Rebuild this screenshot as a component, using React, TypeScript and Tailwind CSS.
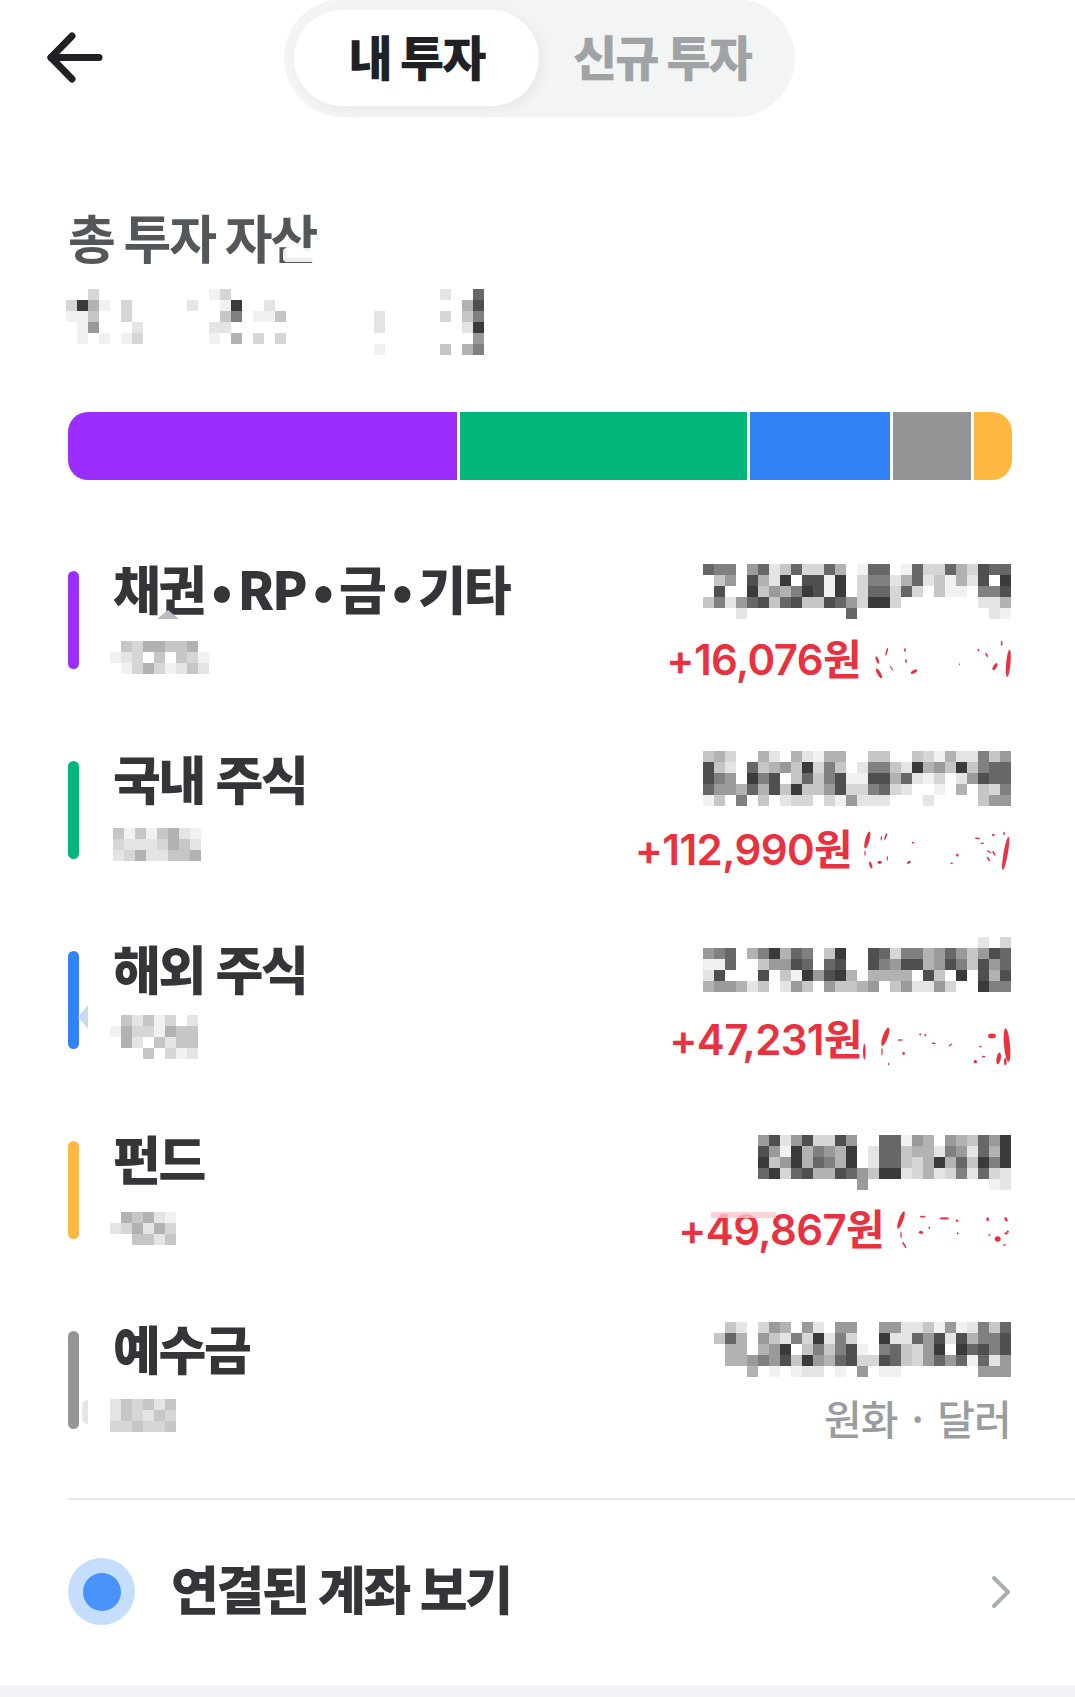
const KR = "font-['Noto_Sans_CJK_KR',sans-serif]";

const shades = ["#f1f1f1", "#e4e4e4", "#d6d6d6", "#c6c6c6", "#b2b2b2", "#9a9a9a", "#808080", "#676767", "#4f4f4f", "#3a3a3a"];

// pixelated (censored) values, one char per 11px cell, "." is empty
function Mosaic({ rows }: { rows: string[] }) {
  const cols = Math.max(...rows.map((r) => r.length));
  return (
    <svg width={cols * 11} height={rows.length * 11} shapeRendering="crispEdges" className="block shrink-0">
      {rows.map((row, y) =>
        row.split("").map((c, x) =>
          c === "." ? null : <rect key={`${x}-${y}`} x={x * 11} y={y * 11} width={11} height={11} fill={shades[Number(c)]} />
        )
      )}
    </svg>
  );
}

type Speck = [number, number, number, number, number];

// leftover red fragments of the censored percentage
function Specks({ width, view, specks }: { width: number; view: string; specks: Speck[] }) {
  return (
    <svg width={width} height={50} viewBox={view} className="block shrink-0">
      {specks.map(([x, y, rx, ry, rot], i) => (
        <ellipse key={i} cx={x} cy={y} rx={rx * 1.3} ry={ry * 1.2} fill="#e8323f" transform={`rotate(${rot} ${x} ${y})`} />
      ))}
    </svg>
  );
}

type Row = {
  name: string;
  nameClass: string;
  color: string;
  sub: string[];
  subTop: string;
  amount: string[];
  amountTop: string;
  gain?: string;
  width?: number;
  view?: string;
  specks?: Speck[];
};

const rows: Row[] = [
  {
    name: "채권 • RP • 금 • 기타",
    nameClass: "[word-spacing:-2px]",
    color: "bg-[#9b2eff]",
    subTop: "mt-[20px]",
    sub: [".3244334.", "012.3.320", ".02420131"],
    amountTop: "pt-[9px]",
    amount: [
      "766.571372274.077.0722742877",
      ".35.8419.8809.266147130418.9",
      ".8..935469809.277272.300.668",
      "361578378338752992.......114",
      "...1.........7............10",
    ],
    gain: "+16,076원",
    width: 138,
    view: "639 240 414 150",
    specks: [
      [652, 315, 3, 10, -20], [657, 355, 4, 14, -30], [680, 290, 2, 10, 15], [735, 285, 2, 5, 0], [738, 318, 2, 5, 0],
      [762, 350, 8, 4, -30], [695, 340, 1.5, 7, -40], [1045, 325, 5, 34, 5], [1025, 265, 2, 7, 0], [1005, 335, 4, 10, 30],
      [980, 300, 2, 6, -30], [955, 285, 2, 3, 0], [898, 328, 1, 3, 0],
    ],
  },
  {
    name: "국내 주식",
    nameClass: "[word-spacing:2px]",
    color: "bg-[#00b67a]",
    subTop: "mt-[17px] ml-[3px]",
    sub: ["30303410", "21112431", "12411334"],
    amountTop: "pt-[6px]",
    amount: [
      "342..41.41044..33..320411635",
      "831.734539263.16631945393677",
      "865.968.37368008847102.15877",
      "7554748393358226721..0.4.326",
      "03.6.3.122.205111...1....355",
    ],
    gain: "+112,990원",
    width: 147,
    view: "705 240 441 150",
    specks: [
      [715, 285, 5, 22, 15], [708, 325, 1.5, 7, 0], [725, 360, 3, 9, -20], [752, 352, 5, 4, 0], [770, 275, 2, 9, 20],
      [757, 280, 1.5, 6, 0], [775, 340, 1.5, 6, 0], [840, 352, 5, 3, -30], [852, 293, 3, 2, 0], [985, 330, 3, 4, 0],
      [968, 355, 3, 2, 0], [1125, 265, 2, 4, 0], [1093, 270, 3, 3, 0], [1045, 280, 6, 2, 10], [1060, 295, 4, 2, 0],
      [1080, 320, 6, 2, 30], [1095, 325, 2, 7, -30], [1078, 342, 2, 7, -30], [1130, 325, 5, 42, 10],
    ],
  },
  {
    name: "해외 주식",
    nameClass: "[word-spacing:2px]",
    color: "bg-[#3182f6]",
    subTop: "mt-[14px]",
    sub: [".31302.1", "04220433.", ".41.3133", "...3.201"],
    amountTop: "pt-[2px]",
    amount: [
      ".........................1.2",
      "567.469476.39..8726645753587",
      "007..35587.78..8658845863857",
      "18...8.3095894.4444.83.9.848",
      "455413.153.53345.351152..966",
    ],
    gain: "+47,231원",
    width: 149,
    view: "605 240 447 150",
    specks: [
      [612, 350, 3, 20, 0], [675, 305, 6, 24, 20], [665, 350, 1.5, 9, 0], [730, 355, 3, 4, 0], [720, 315, 7, 2, 0],
      [780, 298, 3, 2, 0], [795, 300, 2, 3, 0], [820, 325, 5, 2, 0], [870, 330, 5, 2, -40], [995, 303, 9, 6, 0],
      [1040, 330, 7, 42, -5], [1015, 370, 5, 15, 10], [1035, 380, 3, 9, 0], [945, 380, 4, 4, 0], [970, 365, 4, 2, 0],
      [960, 335, 3, 2, 0], [685, 390, 1.5, 6, 0],
    ],
  },
  {
    name: "펀드",
    nameClass: "",
    color: "bg-[#ffb83f]",
    subTop: "mt-[21px]",
    sub: [".43410", "124142", "..3313"],
    amountTop: "pt-[10px]",
    amount: [
      "581582285..77054.543759",
      "850946549.1773441651749",
      "935947649.1773249473969",
      "79278448753991241261721",
      ".........5...........01",
    ],
    gain: "+49,867원",
    width: 115,
    view: "675 240 345 150",
    specks: [
      [690, 285, 5, 23, 20], [700, 360, 2, 9, -30], [690, 330, 1.5, 9, 0], [755, 275, 7, 2, 0], [820, 280, 11, 3, 0],
      [858, 287, 3, 3, 0], [750, 322, 5, 4, 0], [775, 308, 2, 3, 0], [860, 325, 2, 3, 0], [950, 283, 3, 5, 0],
      [1005, 283, 3, 6, -30], [980, 342, 7, 7, 0], [1000, 360, 4, 2, 0], [1005, 325, 4, 3, 0], [955, 330, 3, 2, 0],
      [1010, 320, 3, 3, 0],
    ],
  },
  {
    name: "예수금",
    nameClass: "",
    color: "bg-[#939597]",
    subTop: "mt-[18px]",
    sub: ["132313", "132132", "223223"],
    amountTop: "pt-[7px]",
    amount: [
      ".31.254.51.55..551130501637",
      "374.531629162..911758184668",
      ".44.459.363680.673259.97868",
      ".44565839547822873257570715",
      "...4.0.011.0.5.00.......555",
    ],
  },
];

export default function App() {
  return (
    <div className={`flex h-[1697px] w-[1075px] flex-col overflow-hidden bg-white ${KR}`}>
      <header className="flex h-[117px] shrink-0 items-start pl-[47px]">
        <svg width={56} height={52} viewBox="0 0 56 52" className="mt-[32px]" fill="none" stroke="#1f2124" strokeWidth={7} strokeLinecap="round" strokeLinejoin="round">
          <path d="M25 4 L4 25.5 L25 47" />
          <path d="M4 25.5 H52" />
        </svg>
        <div className="ml-[181px] flex h-[118px] w-[511px] -translate-y-px items-center rounded-[59px] bg-[#f3f5f5] pl-[10px]">
          <div className="flex h-[96px] w-[245px] items-center justify-center rounded-[48px] bg-white pb-[6px] text-[48px] font-extrabold tracking-[-0.04em] text-[#1f2124] shadow-[4px_4px_14px_rgba(0,0,0,0.05)]">
            내 투자
          </div>
          <div className="ml-[34px] pb-[6px] text-[48px] font-extrabold tracking-[-0.04em] text-[#a0a3a6]">신규 투자</div>
        </div>
      </header>

      <section className="relative mt-[91px] flex h-[66px] shrink-0 items-center pb-[8px] pl-[68px] text-[52px] leading-none font-bold tracking-[-0.04em] text-[#54575a]">
        총 투자 자산
        <span className="absolute top-[40px] left-[283px] h-[14px] w-[32px] rounded-[4px] bg-white/90" />
      </section>
      <div className="mt-[15px] shrink-0 pl-[66px]">
        <Mosaic
          rows={[
            "..2..........02...................1..7",
            "2940.2.....1..09..1.................48",
            "003..2........36.003........1.....2.36",
            ".05...1......11.............1.......19",
            ".0.0.02......0.4.2.2.................5",
            "............................0.....3.46",
          ]}
        />
      </div>

      <div className="mt-[57px] mr-[63px] ml-[68px] flex h-[68px] shrink-0 gap-[3px] overflow-hidden rounded-[20px]">
        <div className="w-[389px] bg-[#9b2eff]" />
        <div className="w-[287px] bg-[#00b67a]" />
        <div className="w-[140px] bg-[#3182f6]" />
        <div className="w-[78px] bg-[#939597]" />
        <div className="flex-1 bg-[#ffb83f]" />
      </div>

      <div className="mt-[75px] flex shrink-0 flex-col">
        {rows.map((r) => (
          <div key={r.name} className="flex h-[190px] pr-[64px] pl-[68px] last:h-[183px]">
            <div className={`mt-[16px] h-[98px] w-[11px] shrink-0 rounded-full ${r.color}`} />
            <div className="relative ml-[31px] flex-1">
              <div className={`ml-[3px] flex h-[66px] items-center text-[52px] leading-none font-extrabold tracking-[-0.045em] whitespace-pre text-[#333538] ${r.nameClass}`}>
                {r.name}
              </div>
              <div className={r.subTop}>
                <Mosaic rows={r.sub} />
              </div>
              {r.name === "채권 • RP • 금 • 기타" && (
                <span className="absolute top-[55px] left-[47px] h-0 w-0 border-x-[11px] border-b-[9px] border-x-transparent border-b-[#b9bbbd]" />
              )}
              {r.name === "해외 주식" && (
                <span className="absolute top-[70px] -left-[32px] h-0 w-0 border-y-[12px] border-r-[10px] border-y-transparent border-r-[#c6daf2]" />
              )}
              {r.name === "예수금" && <span className="absolute top-[85px] -left-[28px] h-[24px] w-[6px] rounded-l-full bg-[#e6e6e6]" />}
            </div>
            <div className="flex shrink-0 flex-col items-end">
              <div className={`h-[80px] ${r.amountTop}`}>
                <Mosaic rows={r.amount} />
              </div>
              {r.gain ? (
                <div className="relative flex h-[50px] items-center">
                  <span className="font-['Inter','Noto_Sans_CJK_KR',sans-serif] text-[42px] leading-none font-semibold tracking-[-0.015em] text-[#e8323f]">
                    {r.gain}
                  </span>
                  <div className={r.name === "해외 주식" ? "ml-0" : "ml-[12px]"}>
                    <Specks width={r.width!} view={r.view!} specks={r.specks!} />
                  </div>
                  {r.name === "펀드" && <span className="absolute top-[7px] left-[33px] h-[6px] w-[65px] bg-[#f9c8cc]/80" />}
                </div>
              ) : (
                <div className="flex h-[50px] items-center pb-[6px] text-[41px] leading-none font-medium tracking-[-0.02em] text-[#9a9da0]">원화 · 달러</div>
              )}
            </div>
          </div>
        ))}
      </div>

      <div className="ml-[68px] h-[2px] shrink-0 bg-[#e6e7e9]" />

      <div className="flex h-[185px] shrink-0 items-center pr-[64px] pb-[2px] pl-[68px]">
        <div className="flex h-[67px] w-[67px] items-center justify-center rounded-full bg-[#c5defd]">
          <div className="h-[38px] w-[38px] rounded-full bg-[#4892fc]" />
        </div>
        <span className="ml-[36px] flex-1 pb-[8px] text-[52px] leading-none font-extrabold tracking-[-0.045em] [word-spacing:1px] text-[#333538]">연결된 계좌 보기</span>
        <svg width={20} height={34} viewBox="0 0 20 34" fill="none" stroke="#a9aeb3" strokeWidth={4} strokeLinecap="round" strokeLinejoin="round">
          <path d="M3 3 L17 17 L3 31" />
        </svg>
      </div>

      <div className="flex-1 bg-[#f2f3f5]" />
    </div>
  );
}
